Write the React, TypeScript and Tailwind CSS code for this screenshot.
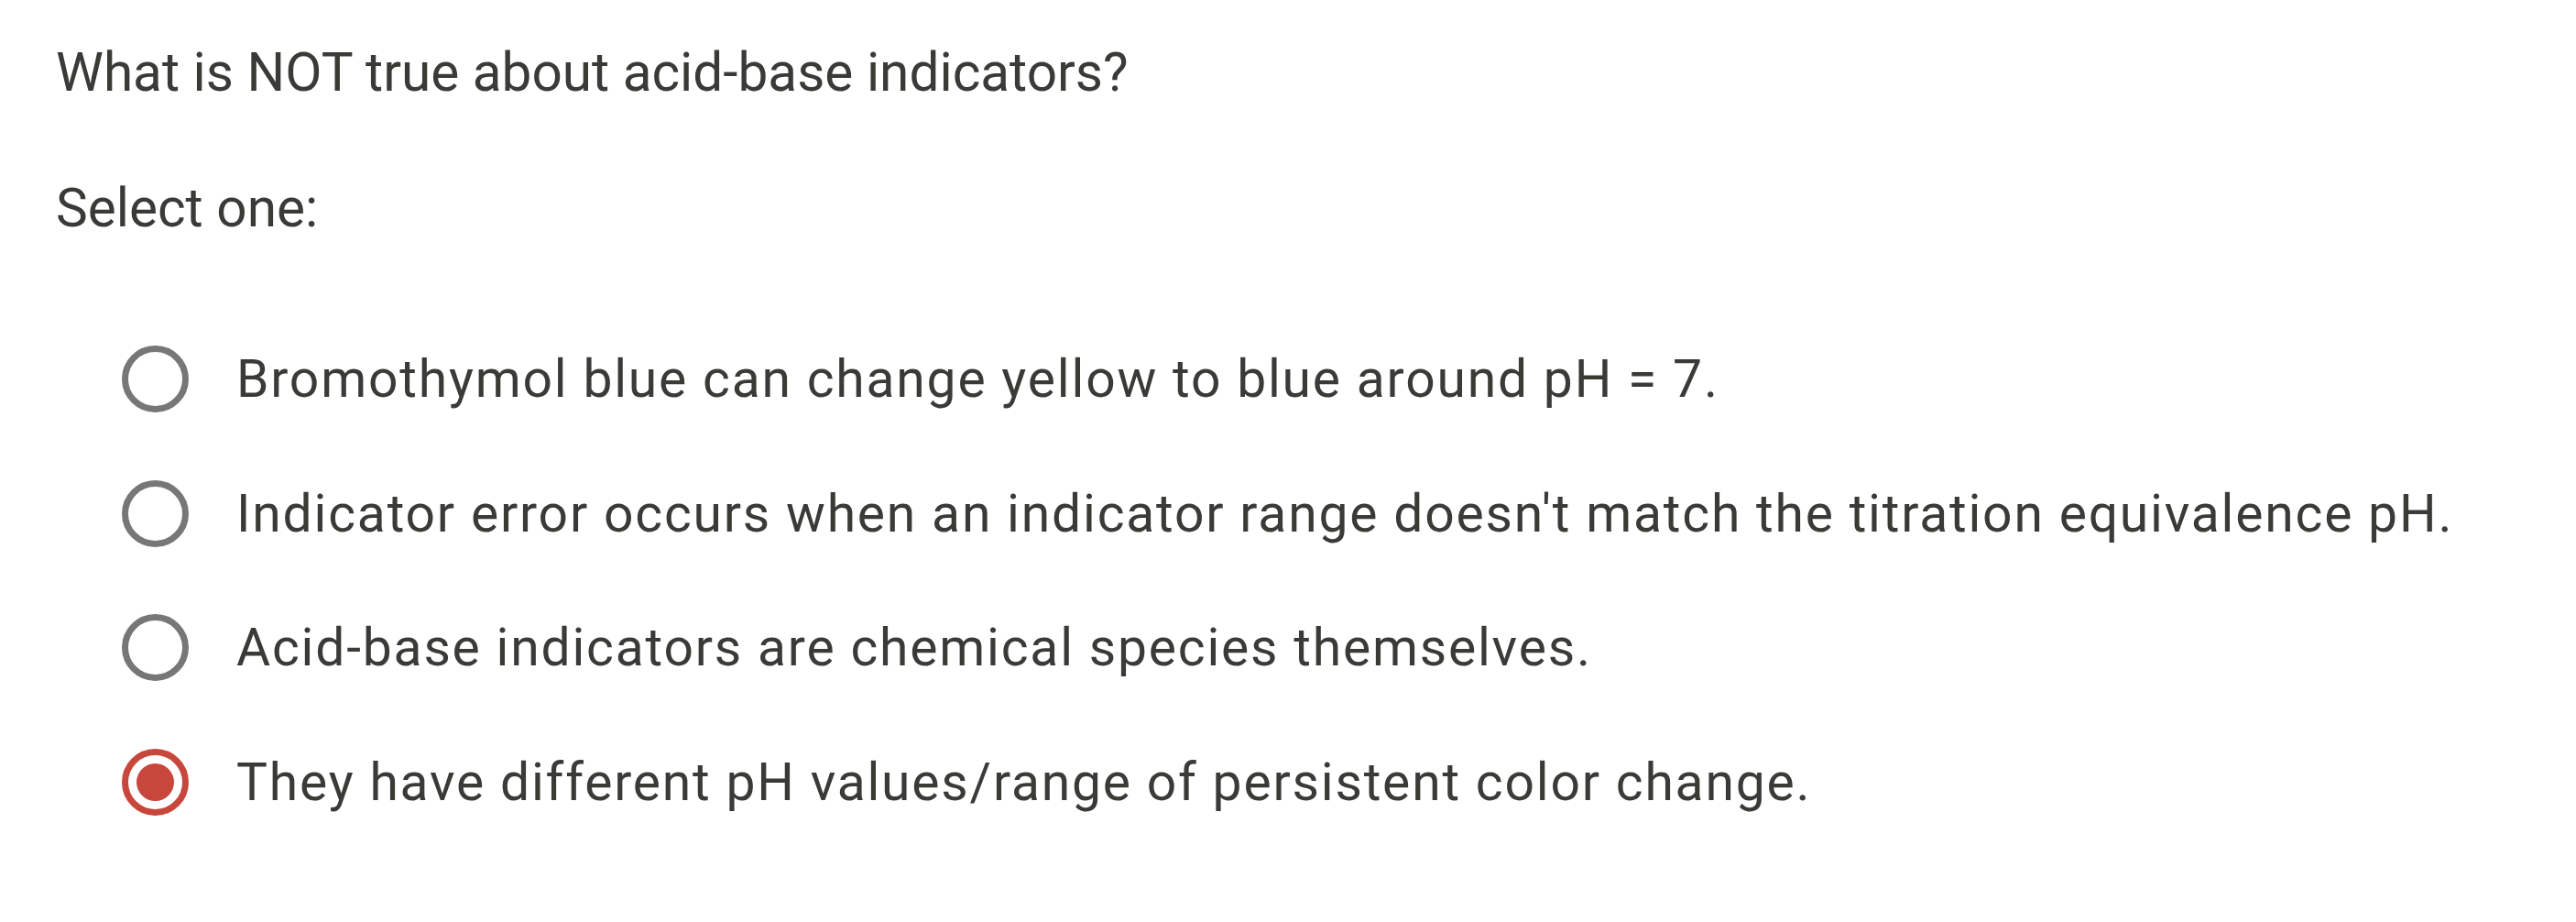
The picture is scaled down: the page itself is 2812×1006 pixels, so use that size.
import React from "react";

const options = [
  "Bromothymol blue can change yellow to blue around pH = 7.",
  "Indicator error occurs when an indicator range doesn't match the titration equivalence pH.",
  "Acid-base indicators are chemical species themselves.",
  "They have different pH values/range of persistent color change.",
];

const Radio = ({ checked }: { checked: boolean }) => {
  if (checked) {
    return (
      <span className="flex h-[73px] w-[73px] shrink-0 items-center justify-center rounded-full border-[7px] border-[#c8473c]">
        <span className="h-[41px] w-[41px] rounded-full bg-[#c8473c]" />
      </span>
    );
  }
  return (
    <span className="block h-[73px] w-[73px] shrink-0 rounded-full border-[7px] border-[#777777]" />
  );
};

const App = () => {
  const selected = 3;
  return (
    <div
      className="min-h-screen bg-white pl-[61px] pt-[50px] text-[#3a3a37]"
      style={{ fontFamily: "Roboto, 'Noto Sans', sans-serif" }}
    >
      <h1 className="text-[58.5px] font-normal leading-[58.5px]">
        What is NOT true about acid-base indicators?
      </h1>
      <p className="mt-[89px] text-[58.5px] leading-[58.5px]">Select one:</p>

      <div className="mt-[84px] flex flex-col pl-[72px]">
        {options.map((text, i) => (
          <label
            key={i}
            className="flex h-[146.7px] cursor-pointer items-center gap-[52px]"
          >
            <Radio checked={i === selected} />
            <span className="text-[57px] leading-[57px] tracking-[1.8px]">
              {text}
            </span>
          </label>
        ))}
      </div>
    </div>
  );
};

export default App;
